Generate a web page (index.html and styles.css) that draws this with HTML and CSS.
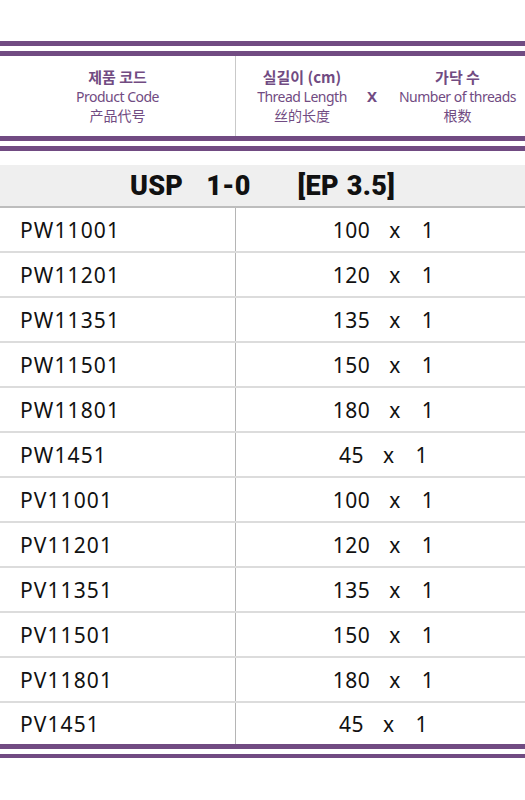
FILE: index.html
```html
<!DOCTYPE html>
<html>
<head>
<meta charset="utf-8">
<link rel="stylesheet" href="styles.css">
</head>
<body>
<div class="page">
  <div class="dbl"><div class="ln"></div><div class="ln"></div></div>
  <div class="head">
    <div class="hcol c1">
      <div class="ko">제품 코드</div>
      <div class="en">Product Code</div>
      <div class="zh">产品代号</div>
    </div>
    <div class="hcol c2">
      <div class="ko">실길이 (cm)</div>
      <div class="en">Thread Length</div>
      <div class="zh">丝的长度</div>
    </div>
    <div class="hx">X</div>
    <div class="hcol c3">
      <div class="ko">가닥 수</div>
      <div class="en">Number of threads</div>
      <div class="zh">根数</div>
    </div>
  </div>
  <div class="dbl"><div class="ln"></div><div class="ln"></div></div>
  <div class="title"><span>USP</span><span class="g1">1-0</span><span class="g2">[EP</span><span class="g3">3.5]</span></div>
  <div class="rows">
    <div class="row"><div class="code">PW11001</div><div class="val"><span class="n">100</span><span class="x">x</span><span>1</span></div></div>
    <div class="row"><div class="code">PW11201</div><div class="val"><span class="n">120</span><span class="x">x</span><span>1</span></div></div>
    <div class="row"><div class="code">PW11351</div><div class="val"><span class="n">135</span><span class="x">x</span><span>1</span></div></div>
    <div class="row"><div class="code">PW11501</div><div class="val"><span class="n">150</span><span class="x">x</span><span>1</span></div></div>
    <div class="row"><div class="code">PW11801</div><div class="val"><span class="n">180</span><span class="x">x</span><span>1</span></div></div>
    <div class="row"><div class="code">PW1451</div><div class="val"><span class="n">45</span><span class="x">x</span><span>1</span></div></div>
    <div class="row"><div class="code">PV11001</div><div class="val"><span class="n">100</span><span class="x">x</span><span>1</span></div></div>
    <div class="row"><div class="code">PV11201</div><div class="val"><span class="n">120</span><span class="x">x</span><span>1</span></div></div>
    <div class="row"><div class="code">PV11351</div><div class="val"><span class="n">135</span><span class="x">x</span><span>1</span></div></div>
    <div class="row"><div class="code">PV11501</div><div class="val"><span class="n">150</span><span class="x">x</span><span>1</span></div></div>
    <div class="row"><div class="code">PV11801</div><div class="val"><span class="n">180</span><span class="x">x</span><span>1</span></div></div>
    <div class="row last"><div class="code">PV1451</div><div class="val"><span class="n">45</span><span class="x">x</span><span>1</span></div></div>
  </div>
  <div class="dbl"><div class="ln"></div><div class="ln thin"></div></div>
</div>
</body>
</html>
```

FILE: styles.css
```css
html, body {
  margin: 0;
  padding: 0;
  background: #fff;
}
.page {
  width: 525px;
  padding-top: 41px;
  font-family: "Noto Sans", "Noto Sans CJK KR", sans-serif;
}
.dbl {
  display: flex;
  flex-direction: column;
  gap: 5px;
}
.ln {
  height: 5px;
  background: #714b82;
}
.ln.thin {
  height: 4px;
}
.head {
  height: 80px;
  display: grid;
  grid-template-columns: 236px 130px 12px 1fr;
  align-items: center;
  color: #714b82;
  text-align: center;
}
.hcol {
  display: flex;
  flex-direction: column;
  align-items: center;
  line-height: 19px;
}
.c1 {
  height: 100%;
  justify-content: center;
  border-right: 1px solid #c9c9c9;
}
.c2 {
  padding-left: 2px;
}
.c3 {
  padding-left: 12px;
}
.ko {
  font-family: "Noto Sans CJK KR", sans-serif;
  font-weight: 700;
  font-size: 15px;
  margin-bottom: 1px;
}
.en {
  font-size: 14px;
  letter-spacing: -0.5px;
  white-space: nowrap;
}
.zh {
  font-family: "Noto Sans CJK SC", sans-serif;
  font-size: 14px;
}
.hx {
  font-weight: 700;
  font-size: 15px;
  font-family: "Noto Sans", sans-serif;
}
.title {
  margin-top: 14px;
  height: 41px;
  background: #efefef;
  border-bottom: 2px solid #bdbdbd;
  display: flex;
  align-items: center;
  justify-content: center;
  font-family: "Roboto", sans-serif;
  font-weight: 900;
  font-size: 27px;
  letter-spacing: 0.3px;
  color: #111;
}
.title .g1 { margin-left: 23px; }
.title .g2 { margin-left: 47px; }
.title .g3 { margin-left: 8px; }
.rows {
  display: flex;
  flex-direction: column;
}
.row {
  height: 45px;
  display: grid;
  grid-template-columns: 236px 1fr;
  border-bottom: 2px solid #dcdcdc;
  box-sizing: border-box;
  font-size: 21px;
  color: #111;
}
.row.last {
  border-bottom: none;
  height: 41px;
}
.code {
  border-right: 1px solid #b5b5b5;
  display: flex;
  align-items: center;
  padding-left: 20px;
  letter-spacing: 1.1px;
}
.val {
  display: flex;
  align-items: center;
  justify-content: center;
  padding-left: 6px;
  letter-spacing: 0.5px;
}
.val .x {
  margin: 0 21px 0 19px;
}
```
